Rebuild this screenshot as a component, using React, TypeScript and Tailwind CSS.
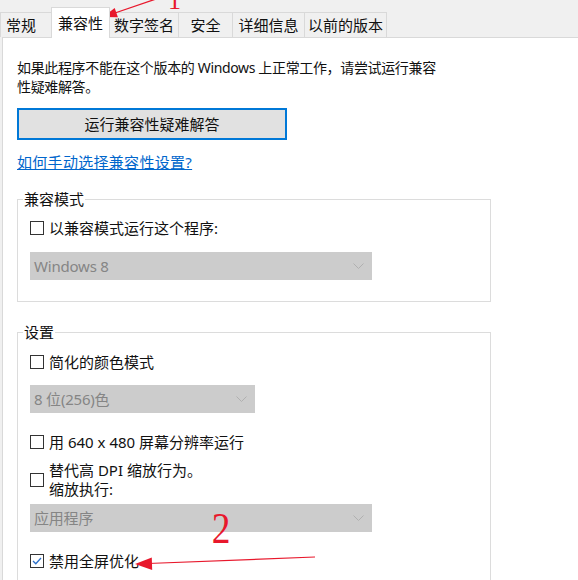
import React from "react";

const tabs = [
  { label: "常规", w: "w-[52px] justify-start pl-[5px]", active: false },
  { label: "兼容性", w: "w-[59px] justify-center", active: true },
  { label: "数字签名", w: "w-[70px] justify-center", active: false },
  { label: "安全", w: "w-[55px] justify-center", active: false },
  { label: "详细信息", w: "w-[73px] justify-center", active: false },
  { label: "以前的版本", w: "w-[83px] justify-center", active: false },
];

function CheckBox({ checked }: { checked?: boolean }) {
  return (
    <span className="w-[14px] h-[14px] border border-[#333333] bg-white flex items-center justify-center shrink-0">
      {checked && (
        <svg width="10" height="8" viewBox="0 0 10 8">
          <path d="M1 4 L3.8 6.8 L9 1" fill="none" stroke="#2a6fc9" strokeWidth="1.3" />
        </svg>
      )}
    </span>
  );
}

function Option({ label, checked }: { label: string; checked?: boolean }) {
  return (
    <div className="flex items-center gap-[5px] h-[20px]">
      <CheckBox checked={checked} />
      <span>{label}</span>
    </div>
  );
}

function DisabledSelect({ value, wide }: { value: string; wide?: boolean }) {
  return (
    <div
      className={`${wide ? "w-[342px]" : "w-[225px]"} h-[28px] bg-[#cccccc] flex items-center justify-between pl-[4px] pr-[8px] text-[15px] text-[#858585]`}
    >
      <span className="tracking-[-0.2px]">{value}</span>
      <svg width="11" height="6" viewBox="0 0 11 6">
        <path d="M0.5 0.5 L5.5 5.5 L10.5 0.5" fill="none" stroke="#b0b0b0" />
      </svg>
    </div>
  );
}

function Group({ title, children }: { title: string; children: React.ReactNode }) {
  return (
    <fieldset className="w-[474px] border border-[#dcdcdc] px-[12px]">
      <legend className="-ml-[7px] px-[1px] leading-[20px]">{title}</legend>
      {children}
    </fieldset>
  );
}

export default function App() {
  return (
    <div className="relative w-[578px] h-[580px] overflow-hidden bg-[#f0f0f0] text-[15px] text-[#111111] font-['Noto_Sans','Noto_Sans_CJK_SC',sans-serif]">
      {/* tab strip */}
      <div className="flex items-end h-[37px]">
        {tabs.map((t) =>
          t.active ? (
            <div
              key={t.label}
              className={`${t.w} h-[31px] -mb-px -ml-px z-10 bg-white border border-b-0 border-[#d9d9d9] flex items-center`}
            >
              {t.label}
            </div>
          ) : (
            <div
              key={t.label}
              className={`${t.w} h-[25px] bg-[#f0f0f0] border border-b-0 border-[#d9d9d9] -ml-px first:ml-0 flex items-center`}
            >
              {t.label}
            </div>
          )
        )}
      </div>

      {/* page */}
      <div className="h-[543px] ml-[2px] bg-white border-t border-l border-[#d9d9d9] pl-[14px] pt-[20px]">
        <p className="leading-[19px] w-[426px] text-[14px] tracking-[-0.35px]">
          如果此程序不能在这个版本的 Windows 上正常工作，请尝试运行兼容性疑难解答。
        </p>

        <button className="mt-[12px] w-[270px] h-[32px] bg-[#e1e1e1] border-2 border-[#0078d7] flex items-center justify-center">
          运行兼容性疑难解答
        </button>

        <a className="block mt-[12px] leading-[20px] text-[#0066cc] underline w-fit tracking-[0.3px]" href="#">
          如何手动选择兼容性设置?
        </a>

        <div className="mt-[17px]">
          <Group title="兼容模式">
            <div className="pt-[9px]">
              <Option label="以兼容模式运行这个程序:" />
            </div>
            <div className="mt-[14px] pb-[21px]">
              <DisabledSelect value="Windows 8" wide />
            </div>
          </Group>
        </div>

        <div className="mt-[20px]">
          <Group title="设置">
            <div className="pt-[10px]">
              <Option label="简化的颜色模式" />
            </div>
            <div className="mt-[13px]">
              <DisabledSelect value="8 位(256)色" />
            </div>
            <div className="mt-[19px]">
              <Option label="用 640 x 480 屏幕分辨率运行" />
            </div>
            <div className="mt-[9px] flex items-center gap-[5px]">
              <CheckBox />
              <div className="leading-[19px]">
                <div>替代高 DPI 缩放行为。</div>
                <div>缩放执行:</div>
              </div>
            </div>
            <div className="mt-[5px]">
              <DisabledSelect value="应用程序" wide />
            </div>
            <div className="mt-[19px] pb-[30px]">
              <Option label="禁用全屏优化" checked />
            </div>
          </Group>
        </div>
      </div>

      {/* red annotations */}
      <svg className="absolute inset-0 pointer-events-none" width="578" height="580" viewBox="0 0 578 580">
        <line x1="156" y1="-1" x2="112" y2="14" stroke="#e8182c" strokeWidth="1.3" />
        <polygon points="103,17 117.9,17.3 114.7,7.9" fill="#e8182c" />
        <line x1="315" y1="557" x2="148" y2="563.5" stroke="#e8182c" strokeWidth="1.2" />
        <polygon points="135,564 152.2,570 151.8,557.6" fill="#e8182c" />
      </svg>
      <span className="absolute left-[168px] top-[-12px] text-[26px] leading-none text-[#e8182c] font-['Liberation_Serif',serif]">
        1
      </span>
      <span className="absolute left-[210px] top-[507px] text-[44px] leading-none text-[#e8182c] font-['Liberation_Serif',serif] scale-x-[0.85]">
        2
      </span>
    </div>
  );
}
